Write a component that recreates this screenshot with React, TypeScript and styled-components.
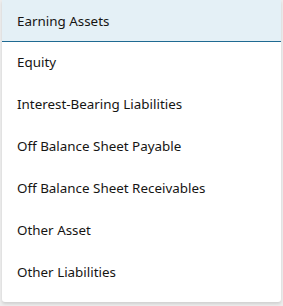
import { createGlobalStyle } from 'styled-components';
import styled from 'styled-components';

const GlobalStyle = createGlobalStyle`
  html, body {
    margin: 0;
    padding: 0;
    background: #ededed;
  }
  body {
    font-family: "Noto Sans", "Open Sans", sans-serif;
    -webkit-font-smoothing: antialiased;
  }
`;

const Page = styled.div`
  width: 283px;
  height: 306px;
  padding: 0 2px;
  box-sizing: border-box;
`;

const Menu = styled.ul`
  list-style: none;
  margin: 0;
  padding: 0 0 8px;
  background: #ffffff;
  border-radius: 0 0 3px 3px;
  box-shadow: 0 2px 3px rgba(0, 0, 0, 0.12);
`;

const Item = styled.li<{ $selected?: boolean }>`
  display: flex;
  align-items: center;
  height: 42px;
  box-sizing: border-box;
  padding: 0 15px ${(p) => (p.$selected ? '0' : '3px')};
  font-size: 13.4px;
  color: #161513;
  background: ${(p) => (p.$selected ? '#e4f0f6' : 'transparent')};
  border-bottom: ${(p) => (p.$selected ? '1px solid #1f6a92' : 'none')};
  white-space: nowrap;
`;

const items = [
  'Earning Assets',
  'Equity',
  'Interest-Bearing Liabilities',
  'Off Balance Sheet Payable',
  'Off Balance Sheet Receivables',
  'Other Asset',
  'Other Liabilities',
];

export default function App() {
  return (
    <Page>
      <GlobalStyle />
      <Menu>
        {items.map((label, i) => (
          <Item key={label} $selected={i === 0}>
            {label}
          </Item>
        ))}
      </Menu>
    </Page>
  );
}
